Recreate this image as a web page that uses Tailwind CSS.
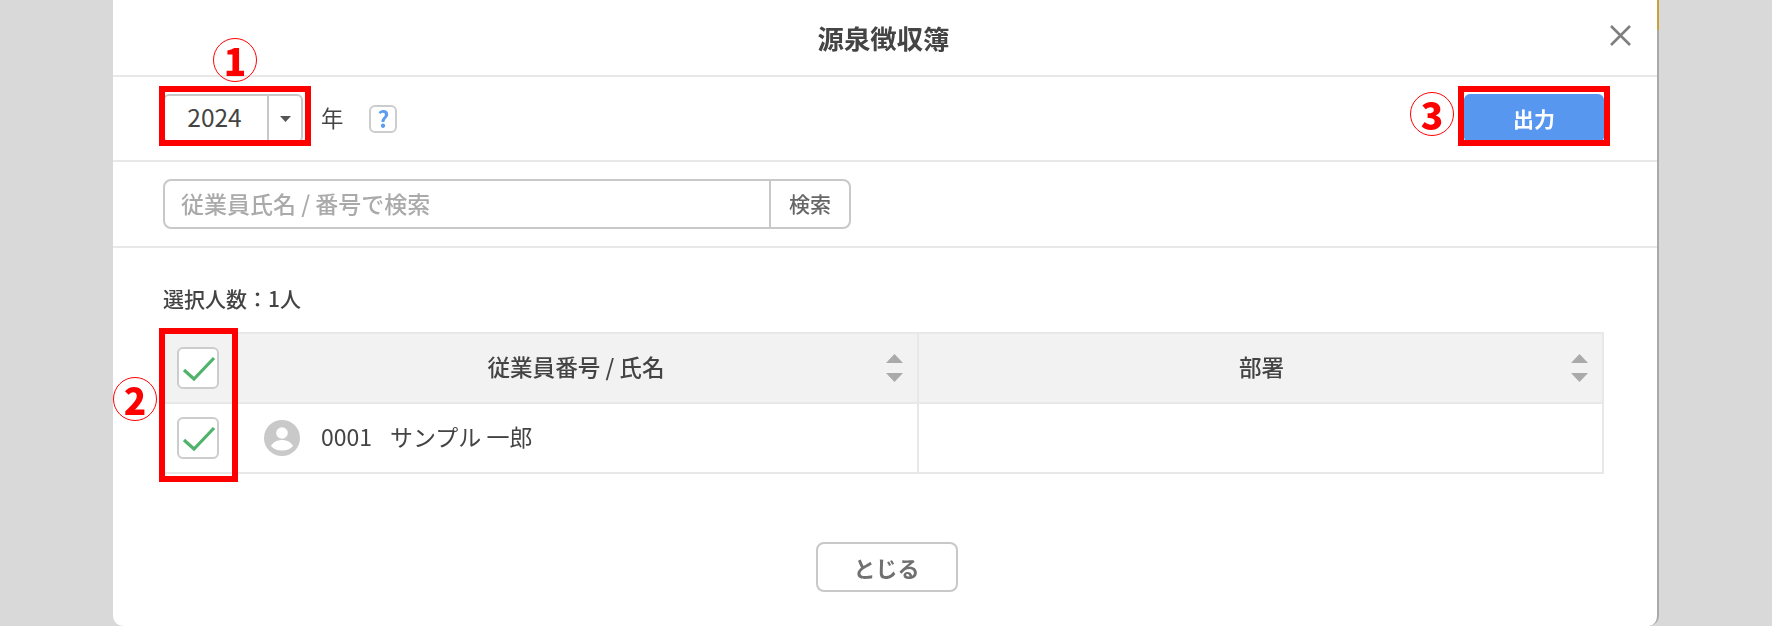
<!DOCTYPE html>
<html lang="ja">
<head>
<meta charset="utf-8">
<script src="https://cdn.jsdelivr.net/npm/@tailwindcss/browser@4"></script>
</head>
<body class="m-0">
<div class="relative h-[626px] w-[1772px] overflow-hidden bg-[#d9d9d9] pl-[113px] font-['Noto_Sans_CJK_JP','Noto_Sans',sans-serif] text-[#444]">
  <!-- modal -->
  <div class="relative flex h-[626px] w-[1546px] flex-col rounded-b-[10px] border-r-2 border-[#a9a9a9] bg-white blur-[0.4px]">
    <header class="relative flex h-[77px] shrink-0 items-center justify-center border-b-2 border-[#e8e8e8]">
      <h1 class="pr-[3px] text-[26.4px] font-bold text-[#444]">源泉徴収簿</h1>
      <svg class="absolute right-[26px] top-[25px] h-[21px] w-[21px]" viewBox="0 0 21 21" fill="none" stroke="#7f7f7f" stroke-width="2.6"><path d="M1 1l19 19M20 1L1 20"/></svg>
    </header>
    <section class="flex h-[85px] shrink-0 items-center justify-between border-b-2 border-[#e8e8e8] pl-[50px] pr-[53px]">
      <div class="flex items-center">
        <div class="flex h-[49px] w-[140px] items-stretch rounded-[6px] border-2 border-[#c8c8c8]">
          <span class="flex w-[102px] items-center justify-center pb-[2px] pr-[3px] text-[24.500px]">2024</span>
          <span class="flex flex-1 items-center justify-center border-l-2 border-[#c8c8c8]">
            <svg class="h-[6px] w-[11px]" viewBox="0 0 11 6"><path d="M0 0h11L5.500 6z" fill="#555"/></svg>
          </span>
        </div>
        <span class="ml-[18px] pb-[2px] text-[22.4px]">年</span>
        <span class="ml-[26px] flex h-[28px] w-[28px] items-center justify-center rounded-[6px] border-2 border-[#cccccc] text-[23px] font-bold text-[#5b9cf0]">?</span>
      </div>
      <button class="flex h-[49px] w-[140px] items-center justify-center rounded-[6px] bg-[#5897ef] text-[21px] font-bold text-white">出力</button>
    </section>
    <section class="flex h-[86px] shrink-0 items-center border-b-2 border-[#e8e8e8] pl-[50px]">
      <div class="flex h-[50px] w-[608px] items-center rounded-l-[8px] border-2 border-[#c8c8c8] pb-[2px] pl-[16px] text-[23px] font-medium text-[#aaaaaa]">従業員氏名 / 番号で検索</div>
      <div class="-ml-[2px] flex h-[50px] w-[82px] items-center justify-center rounded-r-[8px] border-2 border-[#c8c8c8] text-[21px] font-medium text-[#666]">検索</div>
    </section>
    <section class="flex-1 pl-[50px] pr-[53px]">
      <p class="mt-[36px] h-[29px] text-[21px] font-medium leading-[29px] text-[#444]">選択人数：1人</p>
      <div class="mt-[19px] w-[1441px] border-2 border-[#e8e8e8]">
        <div class="flex h-[70px] border-b-2 border-[#e8e8e8] bg-[#f2f2f2]">
          <div class="flex w-[66px] items-center justify-center">
            <span class="flex h-[42px] w-[42px] items-center justify-center rounded-[6px] border-2 border-[#cccccc] bg-white">
              <svg class="h-[38px] w-[38px]" viewBox="0 0 38 38" fill="none" stroke="#4fb36b" stroke-width="3.200"><path d="M5 21l10 9L35 9"/></svg>
            </span>
          </div>
          <div class="grid w-[688px] grid-cols-[1fr_auto_1fr] items-center border-r-2 border-[#e8e8e8]">
            <span></span>
            <span class="pb-[2px] pl-[4px] text-[22.6px] font-medium text-[#444]">従業員番号 / 氏名</span>
            <span class="flex justify-end pr-[14px]">
              <svg class="h-[28px] w-[17px]" viewBox="0 0 17 28" fill="#aaaaaa"><path d="M8.500 0L17 9H0zM0 19h17l-8.500 9z"/></svg>
            </span>
          </div>
          <div class="grid flex-1 grid-cols-[1fr_auto_1fr] items-center">
            <span></span>
            <span class="pb-[2px] pl-[2px] text-[22.6px] font-medium text-[#444]">部署</span>
            <span class="flex justify-end pr-[14px]">
              <svg class="h-[28px] w-[17px]" viewBox="0 0 17 28" fill="#aaaaaa"><path d="M8.500 0L17 9H0zM0 19h17l-8.500 9z"/></svg>
            </span>
          </div>
        </div>
        <div class="flex h-[68px]">
          <div class="flex w-[66px] items-center justify-center">
            <span class="flex h-[42px] w-[42px] items-center justify-center rounded-[6px] border-2 border-[#cccccc] bg-white">
              <svg class="h-[38px] w-[38px]" viewBox="0 0 38 38" fill="none" stroke="#4fb36b" stroke-width="3.200"><path d="M5 21l10 9L35 9"/></svg>
            </span>
          </div>
          <div class="flex w-[688px] items-center border-r-2 border-[#e8e8e8] pl-[33px]">
            <svg class="h-[36px] w-[36px] shrink-0" viewBox="0 0 36 36">
              <circle cx="18" cy="18" r="18" fill="#c9c9c9"/>
              <circle cx="18" cy="13" r="5.800" fill="#fff"/>
              <path d="M7 26c2-4 6.500-6 11-6s9 2 11 6c-2.500 3-6.500 4.500-11 4.500S9.500 29 7 26z" fill="#fff"/>
            </svg>
            <span class="ml-[21px] pb-[3px] text-[23px]">0001</span>
            <span class="ml-[18px] pb-[3px] text-[23px]">サンプル 一郎</span>
          </div>
          <div class="flex-1"></div>
        </div>
      </div>
      <button class="mx-auto mt-[68px] flex h-[50px] w-[142px] translate-x-[3px] items-center justify-center rounded-[8px] border-2 border-[#c8c8c8] text-[22px] font-bold text-[#707070]">とじる</button>
    </section>
  </div>
  <!-- top-right sliver of what lies behind the modal -->
  <div class="absolute left-[1657px] top-0 h-[30px] w-[2px] bg-[#c9a33a]"></div>

  <!-- red annotations drawn over the screenshot -->
  <div class="absolute left-[159px] top-[86px] h-[60px] w-[152px] border-[6px] border-[#ff0000]"></div>
  <div class="absolute left-[1458px] top-[86px] h-[60px] w-[152px] border-[6px] border-[#ff0000]"></div>
  <div class="absolute left-[159px] top-[328px] h-[154px] w-[79px] border-[6px] border-[#ff0000]"></div>
  <span class="absolute left-[213px] top-[38px] flex h-[44px] w-[44px] items-center justify-center rounded-full border-[1.5px] border-[#ff0000] text-[37px] font-black leading-none text-[#ff0000]">1</span>
  <span class="absolute left-[113px] top-[377px] flex h-[44px] w-[44px] items-center justify-center rounded-full border-[1.5px] border-[#ff0000] text-[37px] font-black leading-none text-[#ff0000]">2</span>
  <span class="absolute left-[1410px] top-[92px] flex h-[44px] w-[44px] items-center justify-center rounded-full border-[1.5px] border-[#ff0000] text-[37px] font-black leading-none text-[#ff0000]">3</span>
</div>
</body>
</html>
